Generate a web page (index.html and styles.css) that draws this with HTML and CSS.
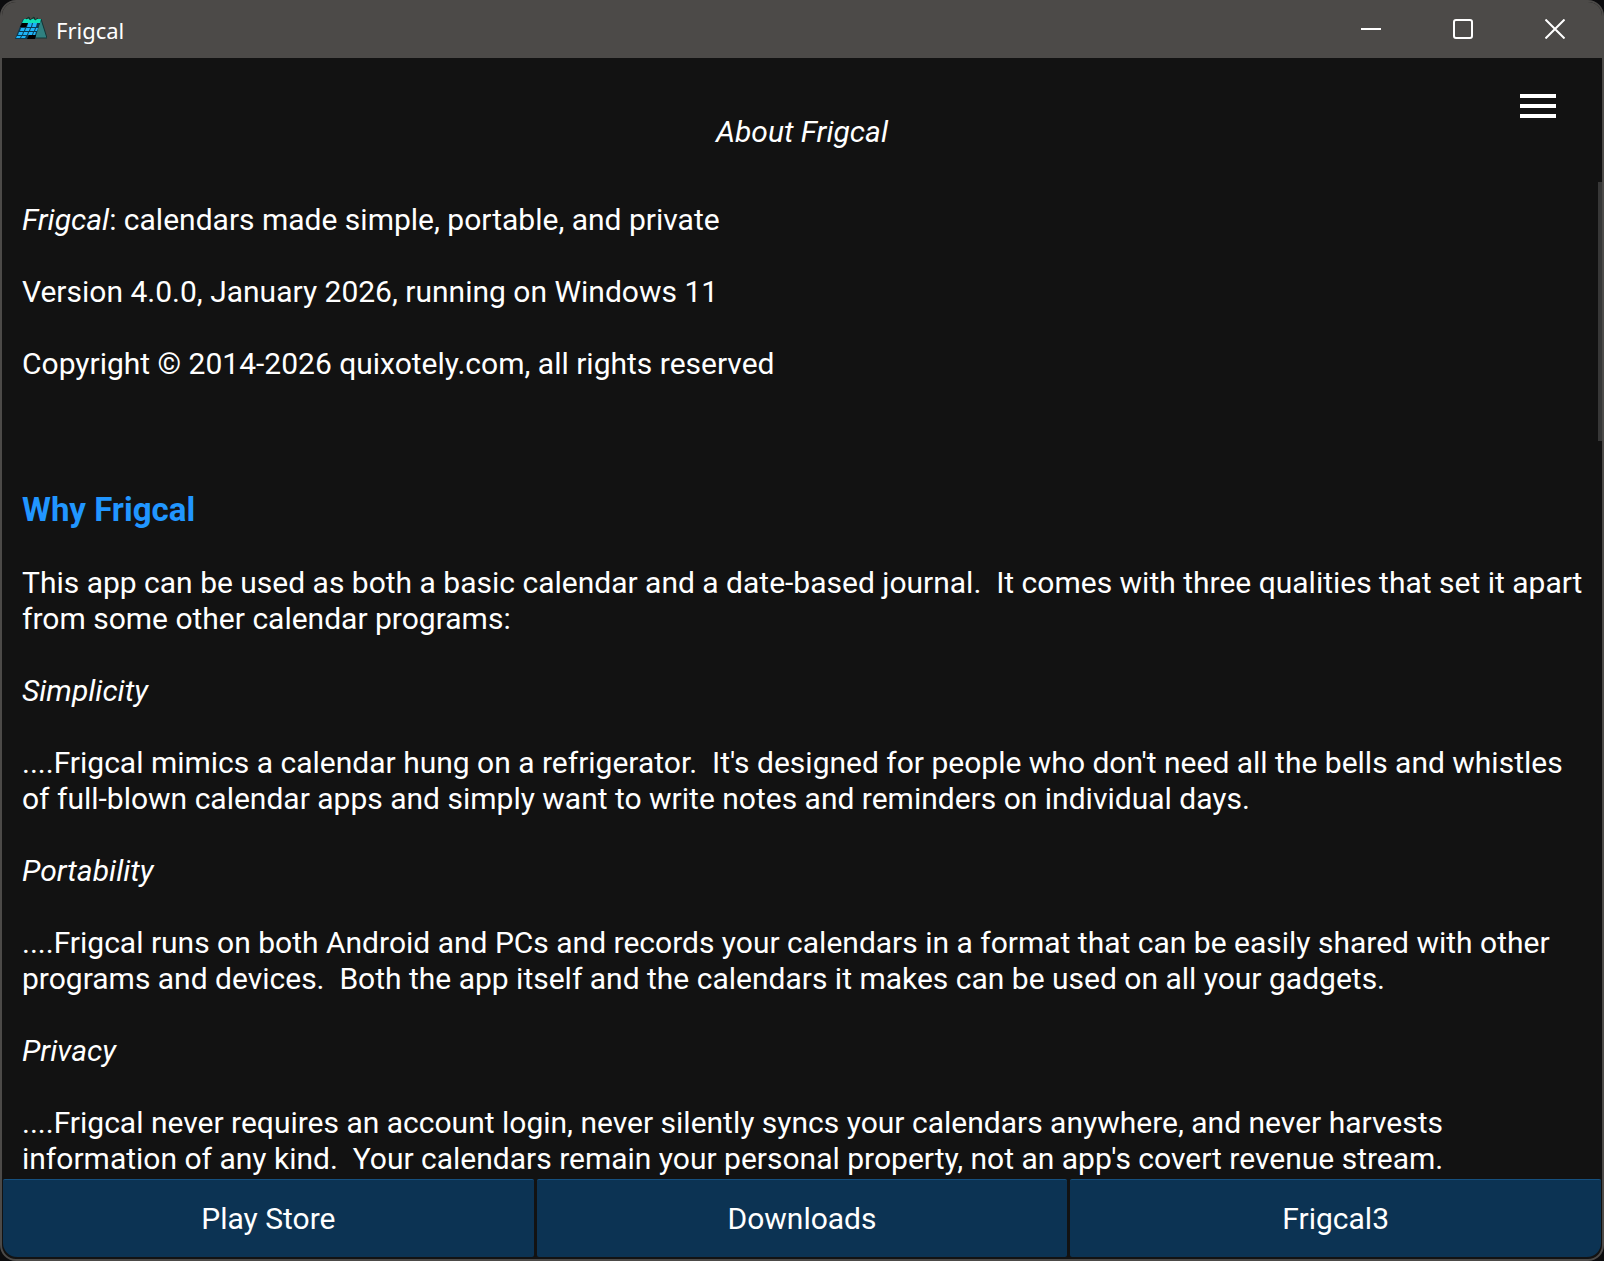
FILE: index.html
```html
<!DOCTYPE html>
<html lang="en">
<head>
  <meta charset="UTF-8" />
  <meta name="viewport" content="width=device-width, initial-scale=1.0"/>
  <title>Frigcal</title>
  <link rel="stylesheet" href="styles.css">
</head>
<body>
  <div class="window">
    <header class="titlebar">
      <svg class="app-icon" viewBox="0 0 32 24" aria-hidden="true">
        <path d="M26 3L32 22H19z" fill="#2f8080" stroke="#123436"/>
        <path d="M8 3H26L20 23H0z" fill="#0b3a52"/>
        <path d="M9 3H26L25 7H7z" fill="#10e0b8"/>
        <g fill="#1eb4f8">
          <path d="M13 7h4l-1 4h-4zM18 7h4l-1 4h-4z"/>
          <path d="M6 12h4l-1 3H5zM11 12h4l-1 3h-4zM16 12h4l-1 3h-4zM21 12h2l-1 3h-2z"/>
          <path d="M4 16h4l-1 3H3zM9 16h4l-1 3H8zM14 16h4l-1 3h-4zM19 16h2l-1 3h-2z"/>
          <path d="M2 20h4l-1 2H1zM7 20h4l-1 2H6z"/>
        </g>
        <path d="M7 7h6l-2 4H5zM14 19h7l-1 4h-8z" fill="#000"/>
        <path d="M11 3l3-2 1 3 4-3 1 3 3-2" fill="none" stroke="#06382c" stroke-width="1"/>
      </svg>
      <span class="app-name">Frigcal</span>
      <button class="win-btn" aria-label="Minimize">
        <svg viewBox="0 0 20 20"><path d="M0 10H20"/></svg>
      </button>
      <button class="win-btn" aria-label="Maximize">
        <svg viewBox="0 0 20 20"><rect x="1" y="1" width="18" height="18" rx="2"/></svg>
      </button>
      <button class="win-btn" aria-label="Close">
        <svg viewBox="0 0 20 20"><path d="M0.5 0.5L19.5 19.5M19.5 0.5L0.5 19.5"/></svg>
      </button>
    </header>

    <div class="topbar">
      <h1>About Frigcal</h1>
      <button class="menu" aria-label="Menu"><span></span><span></span><span></span></button>
    </div>

    <main class="content">
      <div class="text">
        <p><em>Frigcal</em>: calendars made simple, portable, and private</p>
        <p>Version 4.0.0, January 2026, running on Windows 11</p>
        <p>Copyright © 2014-2026 quixotely.com, all rights reserved</p>

        <h2>Why Frigcal</h2>
        <p>This app can be used as both a basic calendar and a date-based journal.  It comes with three qualities that set it apart from some other calendar programs:</p>

        <h3>Simplicity</h3>
        <p>....Frigcal mimics a calendar hung on a refrigerator.  It's designed for people who don't need all the bells and whistles of full-blown calendar apps and simply want to write notes and reminders on individual days.</p>

        <h3>Portability</h3>
        <p>....Frigcal runs on both Android and PCs and records your calendars in a format that can be easily shared with other programs and devices.  Both the app itself and the calendars it makes can be used on all your gadgets.</p>

        <h3>Privacy</h3>
        <p>....Frigcal never requires an account login, never silently syncs your calendars anywhere, and never harvests information of any kind.  Your calendars remain your personal property, not an app's covert revenue stream.</p>
      </div>
      <div class="scrollbar"></div>
    </main>

    <nav class="links">
      <button>Play Store</button>
      <button>Downloads</button>
      <button>Frigcal3</button>
    </nav>
  </div>
</body>
</html>
```
FILE: styles.css
```css
* {
  box-sizing: border-box;
}

body {
  margin: 0;
  background: #0c0c0e;
  color: #fff;
  font-family: Roboto, sans-serif;
  font-size: 30px;
  line-height: 36px;
}

button {
  margin: 0;
  padding: 0;
  border: none;
  background: none;
  color: inherit;
  font: inherit;
  cursor: pointer;
}

.window {
  height: 100vh;
  display: flex;
  flex-direction: column;
  background: #121212;
  border: 2px solid #4c4a48;
  border-radius: 16px;
  overflow: hidden;
}

.titlebar {
  display: flex;
  flex-shrink: 0;
  height: 56px;
  background: #4c4a48;
  padding: 0 1px 2px 13px;
}

.app-icon {
  width: 32px;
  height: 24px;
  margin: 14px 9px 0 0;
}

.app-name {
  flex: 1;
  font-family: "Noto Sans", sans-serif;
  font-size: 22px;
  line-height: 56px;
}

.win-btn {
  width: 92px;
  display: flex;
  align-items: center;
  justify-content: center;
}

.win-btn svg {
  width: 20px;
  height: 20px;
  fill: none;
  stroke: #fff;
  stroke-width: 2;
}

.topbar {
  display: grid;
  grid-template-columns: 1fr auto 1fr;
  flex-shrink: 0;
  height: 124px;
  padding: 36px 46px 0;
}

.topbar h1 {
  grid-column: 2;
  margin: 20px 0 0;
  font-size: 30px;
  font-weight: 400;
  font-style: italic;
}

.menu {
  justify-self: end;
  align-self: start;
  display: flex;
  flex-direction: column;
  gap: 6px;
  width: 36px;
}

.menu span {
  height: 4px;
  background: #fff;
}

.content {
  flex: 1;
  min-height: 0;
  display: flex;
  overflow: hidden;
}

.text {
  flex: 1;
  padding: 20px 12px 0 20px;
}

.text > * {
  margin: 0 0 36px;
}

/* keeps the double space between sentences */
.text p {
  white-space: pre-wrap;
}

.text > h2 {
  margin-top: 108px;
  color: #2196ff;
  font-size: 33px;
  line-height: 39px;
}

.text h3 {
  font-size: 30px;
  font-weight: 400;
  font-style: italic;
}

.text > :last-child {
  margin-bottom: 0;
}

.scrollbar {
  width: 4px;
  height: 26%;
  background: #373737;
}

.links {
  display: flex;
  flex-shrink: 0;
  gap: 3px;
  padding: 0 1px 2px;
}

.links button {
  flex: 1;
  height: 78px;
  background: #0c3353;
  border-top: 1px solid #15507f;
  border-radius: 2px;
}

.links button:first-child {
  border-bottom-left-radius: 14px;
}

.links button:last-child {
  border-bottom-right-radius: 14px;
}
```
